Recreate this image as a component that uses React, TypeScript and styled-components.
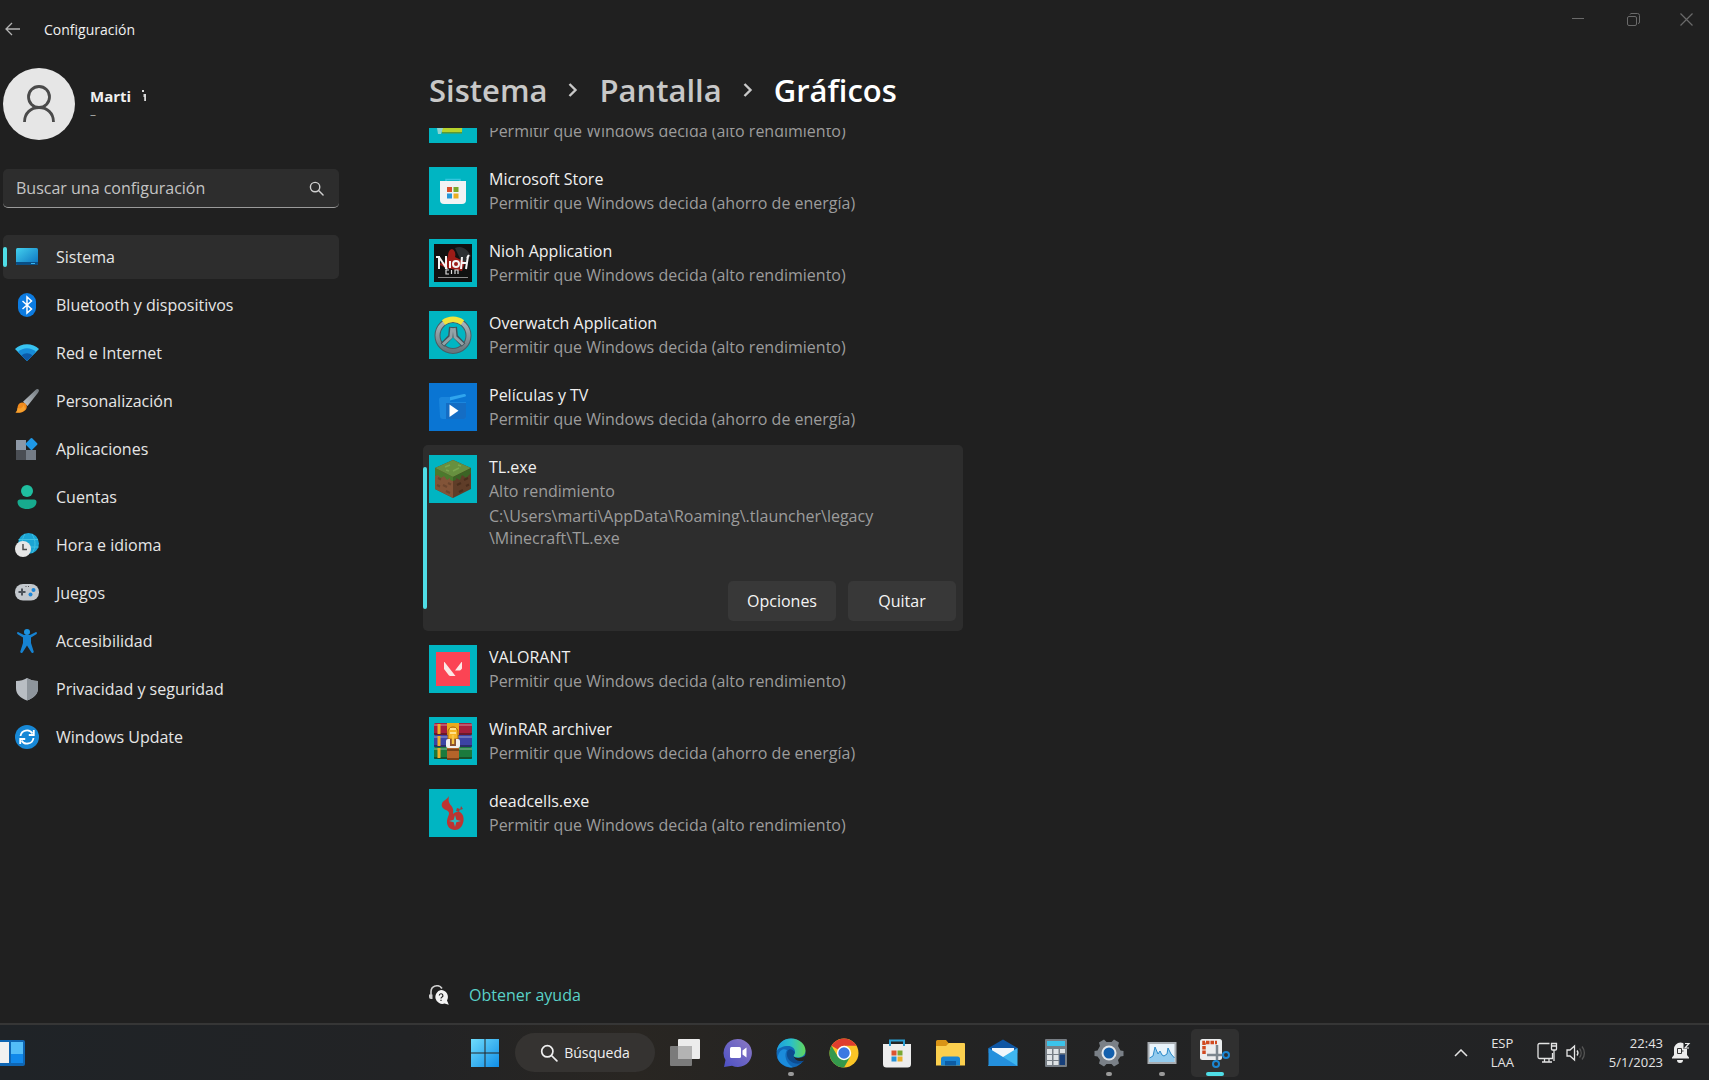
import { ReactNode, useLayoutEffect, useRef, useState } from "react";
import styled, { createGlobalStyle } from "styled-components";

const GlobalStyle = createGlobalStyle`
  * {
    box-sizing: border-box;
  }
  body {
    margin: 0;
    background: #202020;
    color: #f0f0f0;
    font-family: "Open Sans", "Noto Sans", sans-serif;
    font-size: 16px;
    line-height: 24px;
  }
  button, input {
    font: inherit;
    color: inherit;
  }
  button {
    border: 0;
    padding: 0;
    background: none;
  }
  ul, ol {
    list-style: none;
    margin: 0;
    padding: 0;
  }
  a {
    text-decoration: none;
  }
  svg {
    display: block;
    flex-shrink: 0;
  }
`;

const Screen = styled.div`
  display: flex;
  flex-direction: column;
  height: 100vh;
  overflow: hidden;
`;

const TitleBar = styled.header`
  display: flex;
  justify-content: space-between;
  align-items: flex-start;
  height: 60px;
  flex-shrink: 0;
`;

const TitleLeft = styled.div`
  display: flex;
  align-items: center;
  gap: 22px;
  height: 60px;
  padding-left: 4px;
  font-size: 14px;
`;

const WindowControls = styled.div`
  display: flex;
  gap: 5px;
  color: #6a6a6a;
`;

const WindowButton = styled.button`
  display: flex;
  align-items: center;
  justify-content: center;
  width: 50px;
  height: 38px;
  &:last-child {
    width: 46px;
  }
`;

const Body = styled.div`
  display: flex;
  flex: 1;
  min-height: 0;
`;

const Sidebar = styled.aside`
  width: 342px;
  flex-shrink: 0;
  padding: 8px 3px 0;
`;

const Profile = styled.div`
  display: flex;
  gap: 15px;
`;

const Avatar = styled.div`
  display: flex;
  align-items: center;
  justify-content: center;
  width: 72px;
  height: 72px;
  border-radius: 50%;
  background: #e6e6e6;
`;

const ProfileText = styled.div`
  padding-top: 18px;
  line-height: 20px;
`;

const ProfileName = styled.div`
  display: flex;
  gap: 10px;
  font-size: 15px;
  font-weight: 700;
`;

const ProfileMail = styled.div`
  font-size: 12px;
  color: #a0a0a0;
  line-height: 18px;
`;

const SearchBox = styled.label`
  display: flex;
  align-items: center;
  height: 39px;
  margin: 29px 0 27px;
  padding: 0 15px 0 13px;
  border-radius: 5px;
  border-bottom: 1px solid #9a9a9a;
  background: #2d2d2d;
  color: #d0d0d0;
`;

const SearchInput = styled.input`
  flex: 1;
  min-width: 0;
  border: 0;
  outline: 0;
  padding: 0;
  background: none;
  &::placeholder {
    color: #c4c4c4;
    opacity: 1;
  }
`;

const Nav = styled.nav`
  display: flex;
  flex-direction: column;
  gap: 4px;
`;

const NavLink = styled.a<{ $active: boolean }>`
  display: flex;
  align-items: center;
  gap: 17px;
  height: 44px;
  border-radius: 5px;
  color: #e6e6e6;
  background: ${({ $active }) => ($active ? "#2d2d2d" : "transparent")};
  &::before {
    content: "";
    width: 4px;
    height: 20px;
    margin-right: -9px;
    border-radius: 2px;
    background: ${({ $active }) => ($active ? "#4fdde6" : "transparent")};
  }
`;

const Main = styled.main`
  display: flex;
  flex-direction: column;
  flex: 1;
  min-width: 0;
  padding: 8px 0 0 81px;
`;

const Breadcrumb = styled.ol`
  display: flex;
  align-items: center;
  gap: 20px;
  padding: 0 0 16px 6px;
  font-size: 31px;
  line-height: 44px;
  font-weight: 600;
`;

const Crumb = styled.li`
  display: flex;
  align-items: center;
  gap: 20px;
  color: #fff;
  a {
    color: #c8c8c8;
  }
`;

const Scroller = styled.div`
  flex: 1;
  min-height: 0;
  overflow-y: auto;
  scrollbar-width: none;
`;

const AppList = styled.ul`
  display: flex;
  flex-direction: column;
  gap: 4px;
  max-width: 540px;
`;

const AppItem = styled.li<{ $open?: boolean }>`
  position: relative;
  padding: 10px 7px 10px 6px;
  border-radius: 5px;
  background: ${({ $open }) => ($open ? "#2d2d2d" : "transparent")};
`;

const Marker = styled.span`
  position: absolute;
  left: 0;
  top: 22px;
  bottom: 22px;
  width: 4px;
  border-radius: 2px;
  background: #4fdde6;
`;

const AppHeader = styled.button`
  display: flex;
  gap: 12px;
  width: 100%;
  text-align: left;
`;

const Tile = styled.span<{ $color?: string }>`
  width: 48px;
  height: 48px;
  flex-shrink: 0;
  background: ${({ $color }) => $color || "#00b5c2"};
`;

const AppText = styled.span`
  display: flex;
  flex-direction: column;
  justify-content: flex-end;
`;

const Muted = styled.span`
  color: #9c9c9c;
`;

const AppPath = styled.p`
  margin: 2px 0 32px 60px;
  line-height: 22px;
  color: #9c9c9c;
`;

const Actions = styled.div`
  display: flex;
  justify-content: flex-end;
  gap: 12px;
`;

const ActionButton = styled.button`
  width: 108px;
  height: 40px;
  border-radius: 5px;
  background: #383838;
  color: #f4f4f4;
`;

const Help = styled.a`
  display: inline-flex;
  align-items: center;
  gap: 20px;
  margin: 136px 0 20px 6px;
  color: #5ad2c8;
`;

const TaskBar = styled.footer`
  display: flex;
  align-items: center;
  height: 57px;
  flex-shrink: 0;
  padding-right: 9px;
  border-top: 2px solid #363636;
  background: linear-gradient(90deg, #1f2327 0%, #222325 24%, #292622 37%, #232323 50%, #222325 100%);
`;

const TaskSide = styled.div<{ $end?: boolean }>`
  display: flex;
  align-items: center;
  flex: 1 1 0;
  justify-content: ${({ $end }) => ($end ? "flex-end" : "flex-start")};
`;

const TaskGroup = styled.div`
  display: flex;
  align-items: center;
  gap: 5px;
`;

const TaskButton = styled.button<{ $active?: boolean }>`
  position: relative;
  display: flex;
  align-items: center;
  justify-content: center;
  width: 48px;
  height: 48px;
  border-radius: 5px;
  background: ${({ $active }) => ($active ? "#303030" : "transparent")};
`;

const Indicator = styled.span<{ $active?: boolean }>`
  position: absolute;
  bottom: 1px;
  width: ${({ $active }) => ($active ? 18 : 6)}px;
  height: 4px;
  border-radius: 2px;
  background: ${({ $active }) => ($active ? "#4fdde6" : "#9a9a9a")};
`;

const SearchPill = styled.button`
  display: flex;
  align-items: center;
  justify-content: center;
  gap: 6px;
  width: 140px;
  height: 39px;
  margin: 0 1px;
  border-radius: 20px;
  background: #353331;
  font-size: 14px;
`;

const TrayButton = styled.button`
  display: flex;
  align-items: center;
  gap: 8px;
  font-size: 13px;
  line-height: 19px;
  color: #e4e4e4;
`;

const Tray = styled.div`
  display: flex;
  align-items: center;
  gap: 23px;
  padding-right: 9px;
`;

const Stack = styled.span<{ $end?: boolean }>`
  display: flex;
  flex-direction: column;
  align-items: ${({ $end }) => ($end ? "flex-end" : "center")};
`;

const Glass = ({ size }: { size: number }) => (
  <svg width={size} height={size} viewBox="0 0 16 16" fill="none" stroke="currentColor" strokeWidth="1.5">
    <circle cx="6.5" cy="6.5" r="5" />
    <path d="M10.2 10.2 15 15" strokeLinecap="round" />
  </svg>
);

const Chevron = () => (
  <svg width="12" height="16" viewBox="0 0 12 16" fill="none" stroke="#c8c8c8" strokeWidth="2.4">
    <path d="M2.5 2 8.5 8l-6 6" />
  </svg>
);

function NavIcon({ children }: { children: ReactNode }) {
  return (
    <svg width="24" height="24" viewBox="0 0 24 24">
      {children}
    </svg>
  );
}

const navItems = [
  {
    label: "Sistema",
    icon: (
      <>
        <defs>
          <linearGradient id="sys" x1="0" y1="0" x2="1" y2="1">
            <stop offset="0" stopColor="#43d0ee" />
            <stop offset="1" stopColor="#0b71bf" />
          </linearGradient>
        </defs>
        <rect x="1" y="3" width="22" height="17" rx="1.5" fill="url(#sys)" />
        <path d="M1 17h22v1.5a1.5 1.5 0 0 1-1.5 1.5h-19A1.5 1.5 0 0 1 1 18.5z" fill="#0a4f86" />
        <path d="M16 18.5h4" stroke="#38b5ee" />
      </>
    ),
  },
  {
    label: "Bluetooth y dispositivos",
    icon: (
      <>
        <rect x="3" y="0" width="18" height="24" rx="9" fill="#0c7be0" />
        <path d="m7.5 8 9 8-4.5 4V4l4.500 4-9 8" fill="none" stroke="#fff" strokeWidth="1.5" />
      </>
    ),
  },
  {
    label: "Red e Internet",
    icon: (
      <>
        <path d="M0 8C6 1.500 18 1.500 24 8L12 20z" fill="#38c3f1" />
        <path d="M3 11c5-5 13-5 18 0l-9 9z" fill="#168bd8" />
        <path d="M6.500 14.500c3-3 8-3 11 0L12 20z" fill="#0d5aa8" />
      </>
    ),
  },
  {
    label: "Personalización",
    icon: (
      <>
        <defs>
          <linearGradient id="brush" x1="1" y1="0" x2="0" y2="1">
            <stop offset="0" stopColor="#6f767c" />
            <stop offset="1" stopColor="#c3c9ce" />
          </linearGradient>
        </defs>
        <path d="M23.5.5c1 1 .3 2.200-.5 3.300L12.500 17 8 12.800 20.500 1c1-1 2.200-1.300 3-.5z" fill="url(#brush)" />
        <path d="M7.500 13.500c3 .3 4.700 2.300 4.200 5C11 22.500 6 24.500.5 23.500c2-1.500 1.500-3 2.200-6 .6-2.500 2.300-4 4.800-4z" fill="#f08a1d" />
        <path d="M2.500 19c3 1 5 0 6-3l2 4c-2 3-6 4-10 3.500 1.500-1 1.800-2 2-4.500z" fill="#fbb03b" opacity=".6" />
      </>
    ),
  },
  {
    label: "Aplicaciones",
    icon: (
      <>
        <rect x="1" y="3" width="10" height="10" fill="#8e98a6" />
        <rect x="1" y="13" width="10" height="10" fill="#4a4e54" />
        <rect x="11" y="13" width="10" height="10" fill="#747c86" />
        <rect x="12" y="2.500" width="9" height="9" rx="1" fill="#1e98e6" transform="rotate(45 16.500 7)" />
      </>
    ),
  },
  {
    label: "Cuentas",
    icon: (
      <>
        <circle cx="12" cy="6" r="6" fill="#1fbfa0" />
        <path d="M5 14.500h14a2.500 2.500 0 0 1 2.500 2.500c0 4.500-4.500 7-9.500 7s-9.500-2.500-9.500-7A2.500 2.500 0 0 1 5 14.500z" fill="#17ab8e" />
      </>
    ),
  },
  {
    label: "Hora e idioma",
    icon: (
      <>
        <circle cx="13.500" cy="10.500" r="10.500" fill="#1ba5d4" />
        <path d="M3.500 6.500h19.500M3 14h20.500M10 1c-4 6-4 14 0 19M17 1c4 6 4 14 0 19" stroke="#3fc0e2" strokeWidth="1" fill="none" />
        <circle cx="8" cy="16" r="8" fill="#e6e6e6" />
        <path d="M8 11v5.500h4" stroke="#4b4b4b" strokeWidth="1.5" fill="none" />
      </>
    ),
  },
  {
    label: "Juegos",
    icon: (
      <>
        <rect x="0" y="3" width="24" height="16.500" rx="8" fill="#c3c8cd" />
        <path d="M7 7.500v7M3.500 11h7" stroke="#4b5158" strokeWidth="2" />
        <circle cx="18.500" cy="9" r="2" fill="#1c86d8" />
        <circle cx="15.500" cy="13.500" r="2" fill="#1c86d8" />
        <path d="M10.500 5.500h1M13 5.500h1" stroke="#555" />
      </>
    ),
  },
  {
    label: "Accesibilidad",
    icon: (
      <>
        <circle cx="12" cy="3" r="3" fill="#1c93e0" />
        <path
          d="M3.500 3.200 9 6h6l5.500-2.800c1.300-.5 2 1.300.8 2L16 8.500V14l2.700 8.500c.4 1.400-1.700 2.200-2.400.8L12 16.500l-4.300 6.800c-.7 1.400-2.800.6-2.400-.8L8 14V8.500L2.700 5.200c-1.200-.7-.5-2.500.8-2z"
          fill="#1683d2"
        />
      </>
    ),
  },
  {
    label: "Privacidad y seguridad",
    icon: (
      <>
        <path d="M12 1c3 2 6.500 3 11 3v7c0 6-4 10-11 12.500C5 21 1 17 1 11V4c4.500 0 8-1 11-3z" fill="#b9bec4" />
        <path d="M12 1c3 2 6.500 3 11 3v7c0 6-4 10-11 12.500z" fill="#8e959c" />
      </>
    ),
  },
  {
    label: "Windows Update",
    icon: (
      <>
        <circle cx="12" cy="12" r="12" fill="#1788d6" />
        <path d="M5.500 11a6.500 6.500 0 0 1 12-2.500M18.500 13a6.500 6.500 0 0 1-12 2.500" fill="none" stroke="#fff" strokeWidth="1.8" />
        <path d="M18.800 5v5h-5M5.200 19v-5h5" fill="none" stroke="#fff" strokeWidth="1.8" />
      </>
    ),
  },
];

function TileArt({ children }: { children: ReactNode }) {
  return (
    <svg width="48" height="48" viewBox="0 0 48 48">
      {children}
    </svg>
  );
}

const HIGH = "Permitir que Windows decida (alto rendimiento)";
const SAVING = "Permitir que Windows decida (ahorro de energía)";

type AppEntry = {
  name: string;
  mode: string;
  color?: string;
  path?: ReactNode;
  art: ReactNode;
};

const apps: AppEntry[] = [
  {
    name: "",
    mode: HIGH,
    art: (
      <>
        <path d="M12 10h22l-1 28H13z" fill="#b7d32c" />
        <path d="M8 33h6l-2 6H9z" fill="#8ed4d0" />
        <path d="M13 37h20v1.500H13z" fill="#5d9a35" />
      </>
    ),
  },
  {
    name: "Microsoft Store",
    mode: SAVING,
    art: (
      <>
        <path d="M17 15v-2.500h14V15" stroke="#35c5dd" strokeWidth="1.500" fill="none" />
        <path d="M11 14h26v19a4 4 0 0 1-4 4H15a4 4 0 0 1-4-4z" fill="#f1f3f4" />
        <path d="M18 20h5v5h-5z" fill="#d8502c" />
        <path d="M24.500 20h5v5h-5z" fill="#7aa929" />
        <path d="M18 26.500h5v5h-5z" fill="#2596d8" />
        <path d="M24.500 26.500h5v5h-5z" fill="#eaae22" />
      </>
    ),
  },
  {
    name: "Nioh Application",
    mode: HIGH,
    art: (
      <>
        <rect x="5" y="5" width="38" height="38" fill="#111" />
        <path d="M26 9c7-3 12 1 16 8l-8 9z" fill="#2c3032" />
        <path d="M19 17c0-4 2-7 4-7 3 1 4 5 3 8l10 5-3 9-16-3-8-4 8-2z" fill="#9c1c17" />
        <path d="M10 17v13M7 18h3l8 12M17 17v13" stroke="#f5f5f5" strokeWidth="2" fill="none" />
        <path d="M21 22v7M33 18l-1 12M39 17l-2 13M33 24h5M40 16l-2 3" stroke="#f5f5f5" strokeWidth="2" fill="none" />
        <circle cx="27" cy="25" r="3" stroke="#f5f5f5" strokeWidth="2" fill="none" />
        <path d="M20 31h-3v4h3M22.500 31v4M26 35v-4h3v4" stroke="#ddd" strokeWidth="1.200" fill="none" />
        <path d="M9 38.500h30" stroke="#8b8b8b" />
      </>
    ),
  },
  {
    name: "Overwatch Application",
    mode: HIGH,
    art: (
      <>
        <defs>
          <linearGradient id="ring" x1="0" y1="0" x2="0" y2="1">
            <stop offset="0" stopColor="#aebbc0" />
            <stop offset="1" stopColor="#68777d" />
          </linearGradient>
        </defs>
        <circle cx="24" cy="24.500" r="15.500" fill="none" stroke="#4a5c63" strokeWidth="6" />
        <circle cx="24" cy="24.500" r="15.500" fill="none" stroke="url(#ring)" strokeWidth="4" />
        <path d="M14.500 11.500a16 16 0 0 1 19 0" fill="none" stroke="#f0e43c" strokeWidth="5.500" />
        <path d="m22.500 16-1 9.500-8 8.500M25.500 16l1 9.500 8 8.500" fill="none" stroke="#41545b" strokeWidth="5" />
        <path d="m22.800 17-.8 9-8 7.500M25.200 17l.8 9 8 7.500" fill="none" stroke="#93a2a7" strokeWidth="3" />
      </>
    ),
  },
  {
    name: "Películas y TV",
    mode: SAVING,
    color: "#0a75d3",
    art: (
      <>
        <path d="m21 14 14-3a1.500 1.500 0 0 1 1.500 2.500L21 17.500z" fill="#2fa5ee" />
        <path d="M10 17c0-2 1-3 2.500-3H21v5h16v15a2 2 0 0 1-2 2H14a3 3 0 0 1-3-3z" fill="#1a86dd" />
        <path d="M17 20h20v14a2 2 0 0 1-2 2H17z" fill="#146dc4" />
        <path d="m20.500 21.500 9 6.200-9 6.200z" fill="#fff" />
      </>
    ),
  },
  {
    name: "TL.exe",
    mode: "Alto rendimiento",
    path: (
      <>
        C:\Users\marti\AppData\Roaming\.tlauncher\legacy
        <br />
        \Minecraft\TL.exe
      </>
    ),
    art: (
      <>
        <path d="m24 5 18 8v21L24 43 6 34V13z" fill="#5f3d28" />
        <path d="M24 22v21L6 34V13z" fill="#825438" />
        <path d="m24 5 18 8-18 9-18-9z" fill="#67903f" />
        <path d="M6 13l18 9v4l-3-1v-2l-3 2-3-4-3 2-3-3-3 1z" fill="#4b7a2d" />
        <path d="M42 13l-18 9v4l3-1v-2l4 2 2-5 4 3 5-5z" fill="#3c6425" />
        <path d="M9 23l3 1.500M14 30l4 2M8 30l3 1.500M19 28l3 1.500M17 36l4 2" stroke="#6b452e" strokeWidth="2" />
        <path d="m28 30 4-2M35 25l4-2M30 37l4-2M37 31l3-1.500" stroke="#4a2e1d" strokeWidth="2" />
        <path d="m16 12 5-2M24 16l6-3M29 10l3 1M17 15l3 1" stroke="#7aa64f" strokeWidth="1.500" />
      </>
    ),
  },
  {
    name: "VALORANT",
    mode: HIGH,
    art: (
      <>
        <rect x="7" y="7" width="34" height="34" fill="#fb4454" />
        <path d="M15 17.500c0-.5.4-.6.700-.2L26.500 31h-5.200a2 2 0 0 1-1.500-.8L15 24z" fill="#fbe8e6" />
        <path d="M33 17.500c0-.5-.4-.6-.7-.2L26 25.400h4.700c.6 0 1-.3 1.300-.7l1-1.300z" fill="#fbe8e6" />
      </>
    ),
  },
  {
    name: "WinRAR archiver",
    mode: SAVING,
    art: (
      <>
        <rect x="5" y="6" width="38" height="12" rx="1.500" fill="#a51f3c" />
        <rect x="5" y="18" width="38" height="12" rx="1.500" fill="#3c44a4" />
        <rect x="5" y="30" width="38" height="12" rx="1.500" fill="#1b7a3d" />
        <path d="M5 8h38M5 20h38M5 32h38" stroke="#fff" strokeOpacity=".25" strokeWidth="2" />
        <path d="M5 17h38M5 29h38M5 41h38" stroke="#111" strokeOpacity=".4" strokeWidth="2" />
        <path d="M10 7v10M10 19v10M10 31v10" stroke="#eeb02a" strokeWidth="3" />
        <rect x="18" y="6" width="12" height="12" fill="#e8a91c" />
        <path d="M18 30h12v12H18z" fill="#b4642a" />
        <path d="M18 33h12M18 42h12" stroke="#7a421a" strokeWidth="2" />
        <path d="M19 22v-7a5 5 0 0 1 10 0v7z" fill="#f5b425" stroke="#a96410" />
        <path d="M21 12h6M21 16h6" stroke="#ffe08a" strokeWidth="2" />
        <rect x="17" y="22" width="14" height="9" rx="2" fill="#f0eeee" />
        <path d="M21 22h6v7h-6z" fill="#8b5130" />
        <path d="M24 18v9" stroke="#f7c445" strokeWidth="2.500" />
      </>
    ),
  },
  {
    name: "deadcells.exe",
    mode: HIGH,
    art: (
      <>
        <path
          d="M20 7c-1 5 0 7 2.500 10 2 2.500 2 5 1.500 8 2-2 5-2.500 7-2 3 2 4 5 3.500 9C33.500 38 30 41 26 41c-5 0-8.500-4-8-9 .2-3 1.500-5 2-7 .3-2-.7-3-3-4-3.500-1.500-5-4-4-6.500C14 11 18 11 20 7z"
          fill="#bd3432"
        />
        <path d="m28 19 3 1-1 3-3-1zM32 17l2 3-3 1z" fill="#a43c3a" />
        <path d="m26 26 1.300 4.700L32 32l-4.700 1.300L26 38l-1.300-4.700L20 32l4.700-1.300z" fill="#2ab7bd" />
      </>
    ),
  },
];

const StartIcon = () => (
  <svg width="28" height="28" viewBox="0 0 28 28">
    <defs>
      <linearGradient id="start" x1="0" y1="0" x2="1" y2="1">
        <stop offset="0" stopColor="#6fdcfb" />
        <stop offset="1" stopColor="#108ee8" />
      </linearGradient>
    </defs>
    <path d="M0 0h13.500v13.500H0zM14.500 0H28v13.500H14.500zM0 14.500h13.500V28H0zM14.500 14.500H28V28H14.500z" fill="url(#start)" />
  </svg>
);

const taskApps: { label: string; state?: "open" | "active"; art: ReactNode }[] = [
  {
    label: "Vista de tareas",
    art: (
      <>
        <rect x="8" y="1" width="22" height="20" rx="1" fill="#ececec" />
        <rect x="0" y="8" width="22" height="20" rx="1" fill="#7b7b7b" />
        <path d="M8 8h14v13H8z" fill="#b3b3b3" />
      </>
    ),
  },
  {
    label: "Chat",
    art: (
      <>
        <defs>
          <linearGradient id="chat" x1="1" y1="0" x2="0" y2="1">
            <stop offset="0" stopColor="#8d7ac4" />
            <stop offset="1" stopColor="#4c50c4" />
          </linearGradient>
        </defs>
        <path d="M15 1a14 14 0 1 1-6 26.700L1 29l1.500-7A14 14 0 0 1 15 1z" fill="url(#chat)" />
        <rect x="7" y="9" width="11" height="11" rx="1.500" fill="#fff" />
        <path d="m19.500 12.500 4-3v10l-4-3z" fill="#fff" />
      </>
    ),
  },
  {
    label: "Microsoft Edge",
    state: "open",
    art: (
      <>
        <defs>
          <linearGradient id="edge" x1="0" y1="0" x2="1" y2="0">
            <stop offset="0" stopColor="#1c9de0" />
            <stop offset=".5" stopColor="#2bc0c8" />
            <stop offset="1" stopColor="#62d65c" />
          </linearGradient>
        </defs>
        <circle cx="15" cy="15" r="14.500" fill="#1168b7" />
        <path d="M.6 13C2 5 8 .5 15 .5c8.500 0 14.500 6 14.500 12 0 4.500-3.500 7-7.500 7-3 0-4.500-1-4.500-2s1.500-1.500 1.500-4c0-3-3-5.500-7-5.500C7 8 2.500 10 .6 13z" fill="url(#edge)" />
        <path d="M11 12c-3 4-2 13 6 17.300C12 30 4 27 1.500 20 3 12 7 10 11 12z" fill="#1b8cdc" />
        <path d="M17.500 17.500c0 3 3 6 7 6 1.500 0 2.700-.4 3.800-1L31 18v-3c-2 4-6 5-9 5s-4.500-1.500-4.500-2.500z" fill="#242424" />
        <path d="M11.500 13c-2 5 1 11 8 12.500 4 .6 7-1 8.800-3-2.500 1-10.300 1.500-10.800-5 .8-1 1.300-2 1.300-3.500-2-3-6-4-7.300-1z" fill="#0d4b8f" />
      </>
    ),
  },
  {
    label: "Google Chrome",
    art: (
      <>
        <circle cx="15" cy="15" r="14.500" fill="#fbc526" />
        <path d="M15 15 2.500 7.700A14.500 14.500 0 0 1 27.500 7.800H15z" fill="#df3d2f" />
        <path d="M2.500 7.700A14.500 14.500 0 0 0 15 29.500l6.200-10.800L15 15 8.800 18.600z" fill="#34994c" />
        <circle cx="15" cy="15" r="7.200" fill="#fff" />
        <circle cx="15" cy="15" r="5.700" fill="#3b78e2" />
      </>
    ),
  },
  {
    label: "Microsoft Store",
    art: (
      <>
        <path d="M8 8V2.500h14V8" stroke="#2b9fd4" strokeWidth="2" fill="none" />
        <path d="M1 6h28v20a3.500 3.500 0 0 1-3.500 3.500h-21A3.500 3.500 0 0 1 1 26z" fill="#ededed" />
        <path d="M8 5v3M22 5v3" stroke="#2b9fd4" strokeWidth="2" />
        <path d="M9.500 12.500h5v5h-5z" fill="#dc5331" />
        <path d="M15.500 12.500h5v5h-5z" fill="#7aa832" />
        <path d="M9.500 18.500h5v5h-5z" fill="#2792d6" />
        <path d="M15.500 18.500h5v5h-5z" fill="#eab02b" />
      </>
    ),
  },
  {
    label: "Explorador de archivos",
    art: (
      <>
        <path d="M1 3.500A1.500 1.500 0 0 1 2.500 2H11l2.500 3h15v9H1z" fill="#d99416" />
        <path d="M1 8h10l3-3h15a1 1 0 0 1 1 1v21.500H1z" fill="#fbcf4e" />
        <path d="M6 27.500V21a2.500 2.500 0 0 1 2.500-2.500h14A2.500 2.500 0 0 1 25 21v6.500z" fill="#1a86d4" />
        <path d="M10 23h11v4.500H10z" fill="#0d5ca3" />
      </>
    ),
  },
  {
    label: "Correo",
    art: (
      <>
        <path d="M.5 10 15 1.500 29.500 10v5H.5z" fill="#0f56a3" />
        <path d="M4 10h22v10H4z" fill="#f0f6fb" />
        <path d="M29.500 10v18H.5v-1L15 19z" fill="#3fb6ef" />
        <path d="M.5 10 15 19l14.500 9H.5z" fill="#2490dd" />
      </>
    ),
  },
  {
    label: "Calculadora",
    art: (
      <>
        <rect x="4" y="1" width="22" height="28" rx="1" fill="#777e85" />
        <rect x="6" y="3" width="18" height="5" fill="#3cc3ea" />
        <path d="M6 11h5v5H6zM12.500 11h5v5h-5zM19 11h5v4h-5zM6 17h5v5H6zM12.500 17h5v5h-5zM6 23h5v4H6zM12.500 23h5v4h-5z" fill="#dfe3e6" />
        <path d="M18.500 16.500h5.500V27h-5.500z" fill="#173f7a" />
      </>
    ),
  },
  {
    label: "Configuración",
    state: "open",
    art: (
      <>
        <path
          d="M10 1.500 12.500 4h5L20 1.500l5 3L24 8l2.500 4.500 3 .5v5l-3 .5L24 22l1 3.500-5 3-2.500-2.500h-5L10 28.500l-5-3L6 22l-2.500-3.500-3-.5v-5l3-.5L6 8 5 4.500z"
          fill="#7a8087"
        />
        <circle cx="15" cy="15" r="7.500" fill="#e4e8ec" />
        <circle cx="15" cy="15" r="5.500" fill="#1460ad" />
      </>
    ),
  },
  {
    label: "Monitor",
    state: "open",
    art: (
      <>
        <rect x=".5" y="4" width="29" height="22" fill="#a8adb2" />
        <rect x="2.500" y="6" width="25" height="18" fill="#e9f3fa" />
        <path d="M2.500 20 6 18l2-9 3 7 2-3 2 4 2 1 3-2 1-6 3 6 3.500 4v4h-25z" fill="#93cbee" />
        <path d="M2.500 20 6 18l2-9 3 7 2-3 2 4 2 1 3-2 1-6 3 6 3.500 4" fill="none" stroke="#2b8ac9" />
      </>
    ),
  },
  {
    label: "Recortes",
    state: "active",
    art: (
      <>
        <rect x="0" y="1" width="22" height="21" rx="2.500" fill="#eceeef" />
        <path d="M4 16V4.500h13" fill="none" stroke="#d14a20" strokeWidth="3.500" strokeDasharray="3.500 1" />
        <path d="M17 7v15M7 17h17" stroke="#7b868e" strokeWidth="2.500" fill="none" />
        <circle cx="26" cy="17" r="3" fill="none" stroke="#1b86d2" strokeWidth="2" />
        <circle cx="16" cy="26" r="3" fill="none" stroke="#1b86d2" strokeWidth="2" />
      </>
    ),
  },
];

function AppRow({ app, selected, onSelect }: { app: AppEntry; selected: boolean; onSelect: () => void }) {
  const open = selected && !!app.path;
  return (
    <AppItem $open={open}>
      {open && <Marker />}
      <AppHeader type="button" onClick={onSelect}>
        <Tile $color={app.color}>
          <TileArt>{app.art}</TileArt>
        </Tile>
        <AppText>
          {app.name}
          <Muted>{app.mode}</Muted>
        </AppText>
      </AppHeader>
      {open && (
        <>
          <AppPath>{app.path}</AppPath>
          <Actions>
            <ActionButton type="button">Opciones</ActionButton>
            <ActionButton type="button">Quitar</ActionButton>
          </Actions>
        </>
      )}
    </AppItem>
  );
}

export default function App() {
  const [selected, setSelected] = useState("TL.exe");
  const scroller = useRef<HTMLDivElement>(null);

  useLayoutEffect(() => {
    if (scroller.current) scroller.current.scrollTop = 43;
  }, []);

  return (
    <Screen>
      <GlobalStyle />
      <TitleBar>
        <TitleLeft>
          <button type="button" aria-label="Atrás">
            <svg width="18" height="16" viewBox="0 0 18 16" fill="none" stroke="#b4b4b4" strokeWidth="1.3">
              <path d="M16 7H2M8 1 2 7l6 6" />
            </svg>
          </button>
          Configuración
        </TitleLeft>
        <WindowControls>
          <WindowButton type="button" aria-label="Minimizar">
            <svg width="12" height="12" viewBox="0 0 12 12" stroke="currentColor">
              <path d="M0 5.500h12" />
            </svg>
          </WindowButton>
          <WindowButton type="button" aria-label="Restaurar">
            <svg width="13" height="13" viewBox="0 0 13 13" fill="none" stroke="currentColor">
              <rect x=".5" y="3.500" width="9" height="9" rx="1.500" />
              <path d="M3 1.500A1.500 1.500 0 0 1 4 .5h6.500a2 2 0 0 1 2 2V9a1.500 1.500 0 0 1-1.500 1.500" />
            </svg>
          </WindowButton>
          <WindowButton type="button" aria-label="Cerrar">
            <svg width="13" height="13" viewBox="0 0 13 13" stroke="currentColor" strokeWidth="1.200">
              <path d="m.5.5 12 12M12.500.5l-12 12" />
            </svg>
          </WindowButton>
        </WindowControls>
      </TitleBar>

      <Body>
        <Sidebar>
          <Profile>
            <Avatar>
              <svg width="32" height="38" viewBox="0 0 32 38" fill="none" stroke="#4a4a4a" strokeWidth="2.800">
                <circle cx="16" cy="12" r="10.500" />
                <path d="M1.500 37C1.500 28 8 22.500 16 22.500S30.500 28 30.500 37" />
              </svg>
            </Avatar>
            <ProfileText>
              <ProfileName>
                <span>Marti</span>
                <svg width="6" height="20" viewBox="0 0 6 20" fill="#d8d8d8">
                  <path d="M1 4h2v2H1zM2.500 8H5v7H3.200V11H2.500z" />
                </svg>
              </ProfileName>
              <ProfileMail>–</ProfileMail>
            </ProfileText>
          </Profile>
          <SearchBox>
            <SearchInput type="text" placeholder="Buscar una configuración" aria-label="Buscar una configuración" />
            <Glass size={15} />
          </SearchBox>
          <Nav>
            {navItems.map((item, i) => (
              <NavLink key={item.label} href="#" $active={i === 0}>
                <NavIcon>{item.icon}</NavIcon>
                {item.label}
              </NavLink>
            ))}
          </Nav>
        </Sidebar>

        <Main>
          <Breadcrumb>
            <Crumb>
              <a href="#">Sistema</a>
              <Chevron />
            </Crumb>
            <Crumb>
              <a href="#">Pantalla</a>
              <Chevron />
            </Crumb>
            <Crumb>Gráficos</Crumb>
          </Breadcrumb>
          <Scroller ref={scroller}>
            <AppList>
              {apps.map((app) => (
                <AppRow key={app.name} app={app} selected={app.name === selected} onSelect={() => setSelected(app.name)} />
              ))}
            </AppList>
            <Help href="#">
              <svg width="20" height="20" viewBox="0 0 20 20">
                <path d="M2 12V7a6 6 0 0 1 11-3.500" fill="none" stroke="#d0d0d0" strokeWidth="1.600" />
                <path d="M0 9.500h3.500V14H2a2 2 0 0 1-2-2z" fill="#d0d0d0" />
                <path d="M12 5a7 7 0 0 1 6 10.500l1.800 4.200-4.200-1.200A7 7 0 1 1 12 5z" fill="#f4f4f4" />
                <path d="M10.300 10.500a1.800 1.800 0 1 1 2.500 1.700c-.6.300-.8.600-.8 1.300M12 14.700v1.300" fill="none" stroke="#222" strokeWidth="1.200" />
              </svg>
              Obtener ayuda
            </Help>
          </Scroller>
        </Main>
      </Body>

      <TaskBar>
        <TaskSide>
          <button type="button" aria-label="Widgets">
            <svg width="25" height="26" viewBox="0 0 25 26">
              <path d="M0 0h23a2 2 0 0 1 2 2v22a2 2 0 0 1-2 2H0z" fill="#0f66b4" />
              <path d="M0 2h9v21H0z" fill="#f1f1f1" />
              <path d="M11 2h12v12H11z" fill="#54bdf8" />
              <path d="M11 14h12v9H11z" fill="#1188ea" />
            </svg>
          </button>
        </TaskSide>
        <TaskGroup>
          <TaskButton type="button" aria-label="Inicio">
            <StartIcon />
          </TaskButton>
          <SearchPill type="button">
            <Glass size={18} />
            Búsqueda
          </SearchPill>
          {taskApps.map((app) => (
            <TaskButton key={app.label} type="button" aria-label={app.label} $active={app.state === "active"}>
              <svg width="30" height="30" viewBox="0 0 30 30">
                {app.art}
              </svg>
              {app.state && <Indicator $active={app.state === "active"} />}
            </TaskButton>
          ))}
        </TaskGroup>
        <TaskSide $end>
          <Tray>
            <TrayButton type="button" aria-label="Iconos ocultos">
              <svg width="14" height="8" viewBox="0 0 14 8" fill="none" stroke="currentColor" strokeWidth="1.500">
                <path d="m1 7 6-6 6 6" />
              </svg>
            </TrayButton>
            <TrayButton type="button">
              <Stack>
                <span>ESP</span>
                <span>LAA</span>
              </Stack>
            </TrayButton>
            <TrayButton type="button" aria-label="Red y volumen">
              <svg width="21" height="21" viewBox="0 0 21 21" fill="none" stroke="currentColor" strokeWidth="1.300">
                <path d="M12.500 1.500h-10a1.500 1.500 0 0 0-1.500 1.500v12a1.500 1.500 0 0 0 1.500 1.500h13V11M7.500 16.500v3.500M12 16.500v3.500M5 20h10" />
                <path d="M14.500 1.500h5V7a1 1 0 0 1-1 1h-3a1 1 0 0 1-1-1zM14.500 4h5M17 8v11" />
              </svg>
              <svg width="20" height="18" viewBox="0 0 20 18" fill="none" stroke="currentColor" strokeWidth="1.300">
                <path d="M1 6h3l4.500-4v14L4 12H1z" />
                <path d="M11 6.500a4 4 0 0 1 0 5" />
                <path d="M13.500 4.500a7 7 0 0 1 0 9M16 2.500a10 10 0 0 1 0 13" stroke="#555" />
              </svg>
            </TrayButton>
            <TrayButton type="button">
              <Stack $end>
                <span>22:43</span>
                <span>5/1/2023</span>
              </Stack>
              <svg width="20" height="21" viewBox="0 0 20 21">
                <path d="M3 7a6.500 6.500 0 0 1 13 0v6l2 2.500v1H1v-1L3 13zM6 18h6a3 3 0 0 1-6 0z" fill="#ececec" />
                <path d="M6.500 6.500h4v5h-4zM10 9h2.500" fill="none" stroke="#333" />
                <path d="M12.500 0H20v7h-7.500z" fill="#222426" />
                <path d="M14 1.500h4L14 6h4" fill="none" stroke="#ececec" strokeWidth="1.200" />
              </svg>
            </TrayButton>
          </Tray>
        </TaskSide>
      </TaskBar>
    </Screen>
  );
}
